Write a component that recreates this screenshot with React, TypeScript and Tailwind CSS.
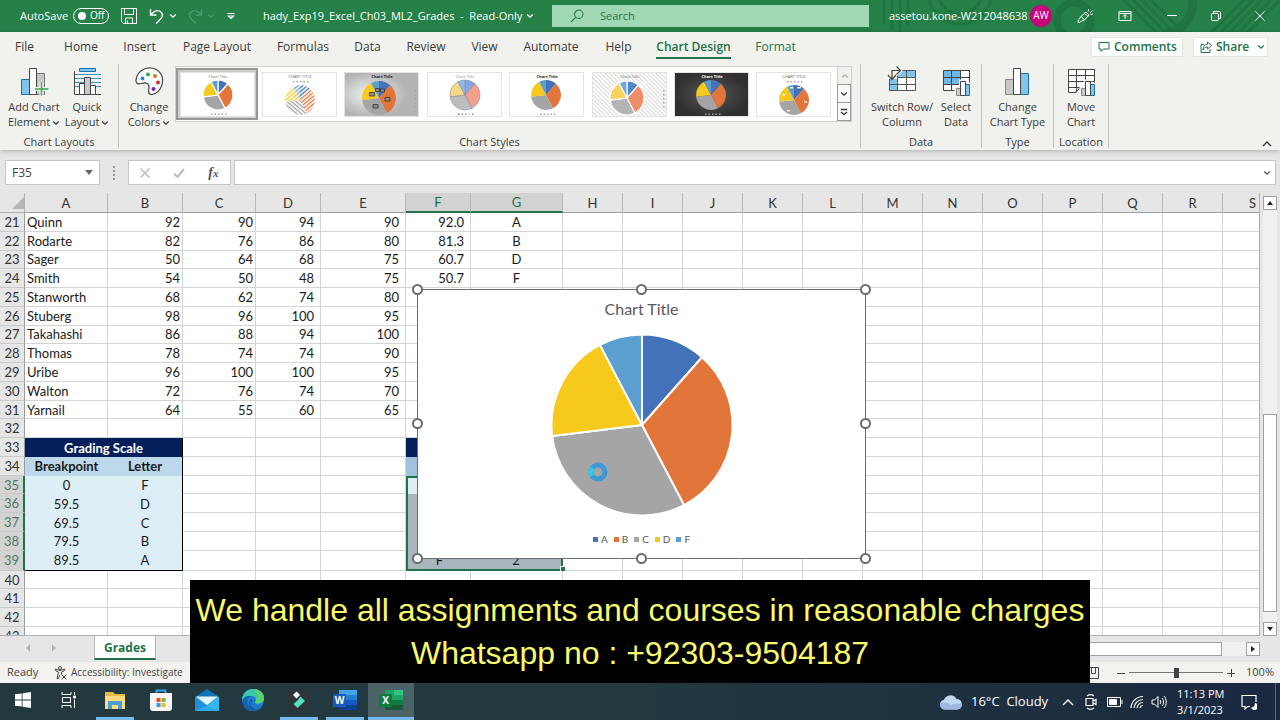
import React from "react";

const COUNTS = [3, 8, 8, 5, 2];
const GRADES = ["A", "B", "C", "D", "F"];
const COLORS = ["#4472b8", "#e2763a", "#a5a5a5", "#f7c91c", "#5b9fd0"];
const SOFT = ["#86a8dd", "#f2a08c", "#bdbdbd", "#f8d886", "#8fbbe6"];

type PieProps = {
  cx: number;
  cy: number;
  r: number;
  fills?: string[];
  stroke?: string;
  strokeWidth?: number;
};

function Pie({ cx, cy, r, fills = COLORS, stroke = "none", strokeWidth = 0 }: PieProps) {
  const total = COUNTS.reduce((a, b) => a + b, 0);
  let run = 0;
  return (
    <g stroke={stroke} strokeWidth={strokeWidth} strokeLinejoin="round">
      {COUNTS.map((n, i) => {
        const a = (run / total) * Math.PI * 2;
        run += n;
        const b = (run / total) * Math.PI * 2;
        const d = `M${cx} ${cy}L${cx + r * Math.sin(a)} ${cy - r * Math.cos(a)}A${r} ${r} 0 0 1 ${cx + r * Math.sin(b)} ${cy - r * Math.cos(b)}Z`;
        return <path key={i} d={d} fill={fills[i]} />;
      })}
    </g>
  );
}

function Chevron({ className = "" }: { className?: string }) {
  return (
    <svg viewBox="0 0 8 8" className={`inline-block h-2 w-2 ${className}`} fill="none" stroke="currentColor" strokeWidth="1.3">
      <path d="M1.2 2.6 4 5.2 6.8 2.6" />
    </svg>
  );
}

/* ---------- title bar ---------- */

function TitlePattern() {
  return (
    <svg className="absolute inset-y-0 right-0 h-full w-[410px]" viewBox="0 0 410 32" preserveAspectRatio="xMaxYMid slice" fill="none" stroke="#1f7440" aria-hidden="true">
      <g strokeWidth="3">
        <path d="M14 0v24M22 0v30M30 0v32M38 0v26" />
        <circle cx="90" cy="-8" r="22" />
        <circle cx="90" cy="-8" r="32" />
      </g>
      <circle cx="204" cy="20" r="17" strokeWidth="8" />
      <path d="M250 -4l40 40M259 -4l40 40M268 -4l40 40M277 -4l40 40" strokeWidth="3" />
      <path d="M322 -4a32 32 0 0 1-26 38" strokeWidth="9" />
      <path d="M338 36l40-40M347 36l40-40M356 36l40-40M365 36l40-40M374 36l40-40" strokeWidth="3" />
    </svg>
  );
}

function TitleBar() {
  return (
    <header className="relative flex h-8 shrink-0 items-center overflow-hidden bg-[#258147] text-xs text-white">
      <TitlePattern />
      <div className="relative flex w-[552px] shrink-0 items-center pl-5">
        <label className="flex items-center gap-1">
          <span className="w-[49px] text-[11px]">AutoSave</span>
          <button role="switch" aria-checked="false" className="flex h-4 w-9 items-center gap-1 rounded-full border border-white pl-1 text-[10px]">
            <span className="h-2 w-2 rounded-full bg-white" />
            Off
          </button>
        </label>
        <button aria-label="Save" className="ml-3">
          <svg viewBox="0 0 16 16" className="h-4 w-4" fill="none" stroke="currentColor">
            <path d="M.5 .5h15v15h-13l-2-2zM3.5 .5v6h9v-6M4.500 15v-5h7v5M6.500 15v-2.500" />
          </svg>
        </button>
        <button aria-label="Undo" className="ml-3">
          <svg viewBox="0 0 16 16" className="h-4 w-4" fill="none" stroke="currentColor" strokeWidth="1.3">
            <path d="M1.500 1v6h6M1.800 6.700C5 2.500 9 1.500 12 4c3 3 1.500 6-5 11.500" />
          </svg>
        </button>
        <Chevron className="ml-1" />
        <button aria-label="Redo" className="ml-2.5 text-[#4c9c69]">
          <svg viewBox="0 0 16 16" className="h-4 w-4" fill="none" stroke="currentColor" strokeWidth="1.3">
            <path d="M14.500 1v6h-6M14.200 6.700C11 2.500 7 1.500 4 4c-3 3-1.500 6 5 11.500" />
          </svg>
        </button>
        <Chevron className="ml-1 text-[#4c9c69]" />
        <button aria-label="Customize Quick Access Toolbar" className="ml-3">
          <svg viewBox="0 0 8 8" className="h-2 w-2" fill="none" stroke="currentColor" strokeWidth="1.2">
            <path d="M.5 1.500h7M1.500 4 4 6.500 6.500 4z" />
          </svg>
        </button>
        <div className="ml-7 flex items-center gap-1 whitespace-pre text-[11px]">
          <span>hady_Exp19_Excel_Ch03_ML2_Grades  -  Read-Only</span>
          <Chevron />
        </div>
      </div>
      <label className="relative mr-5 flex h-[22px] flex-1 items-center gap-4 bg-[#a0d8b4] pl-[18px] text-[#217346]">
        <svg viewBox="0 0 16 16" className="h-3.5 w-3.5 shrink-0" fill="none" stroke="currentColor" strokeWidth="1.2">
          <circle cx="10" cy="6" r="4.800" />
          <path d="M6.500 9.500 1 15" />
        </svg>
        <input aria-label="Search" placeholder="Search" className="w-full bg-transparent text-[11px] outline-none placeholder:text-[#217346]" />
      </label>
      <div className="relative flex w-[391px] shrink-0 items-center">
        <span className="w-[141px] text-[11px]">assetou.kone-W212048638</span>
        <span className="flex h-[22px] w-[22px] items-center justify-center rounded-full bg-[#c8007c] text-[10px]">AW</span>
        <button aria-label="Coming soon" className="ml-6">
          <svg viewBox="0 0 18 16" className="h-4 w-[18px]" fill="none" stroke="currentColor">
            <path d="M2 14.500c0-2 1-3.500 3-6L10 4l3 3-4.500 5c-2 1-3.500 1-5 2.500zM5 8.500l3.500 3.500M12 3.500 13 1M14 5l2.500-2.500M14.500 6.500 17 6M9 5.500l3 3" />
          </svg>
        </button>
        <button aria-label="Ribbon display options" className="ml-6">
          <svg viewBox="0 0 14 12" className="h-3 w-3.5" fill="none" stroke="currentColor">
            <path d="M1 1.500h12v9H1zM1 3.500h12M7 9V5M5 6.500l2-2 2 2" />
          </svg>
        </button>
        <button aria-label="Minimize" className="ml-8 flex w-4 justify-center">
          <svg viewBox="0 0 10 10" className="h-2.5 w-2.5" stroke="currentColor"><path d="M0 4.500h10" /></svg>
        </button>
        <button aria-label="Restore" className="ml-7 flex w-4 justify-center">
          <svg viewBox="0 0 10 10" className="h-2.5 w-2.5" fill="none" stroke="currentColor">
            <rect x=".5" y="2.500" width="7" height="7" rx="1" />
            <path d="M2.500 2V.5h6l1 1v6H8" />
          </svg>
        </button>
        <button aria-label="Close" className="ml-7 flex w-4 justify-center">
          <svg viewBox="0 0 10 10" className="h-2.5 w-2.5" stroke="currentColor"><path d="M.5 .5l9 9M9.500 .5l-9 9" /></svg>
        </button>
      </div>
    </header>
  );
}

/* ---------- ribbon ---------- */

const TABS: [string, string][] = [
  ["File", "w-[49px]"],
  ["Home", "w-[64px]"],
  ["Insert", "w-[53px]"],
  ["Page Layout", "w-[102px]"],
  ["Formulas", "w-[70px]"],
  ["Data", "w-[59px]"],
  ["Review", "w-[58px]"],
  ["View", "w-[59px]"],
  ["Automate", "w-[74px]"],
  ["Help", "w-[61px]"],
  ["Chart Design", "w-[89px]"],
  ["Format", "w-[75px]"],
];

function RibbonTabs() {
  return (
    <nav className="flex h-[30px] items-center text-xs">
      {TABS.map(([name, w]) => (
        <button
          key={name}
          className={`${w} flex shrink-0 justify-center whitespace-nowrap ${name === "Chart Design" ? "font-semibold text-[#217346]" : name === "Format" ? "text-[#217346]" : ""}`}
        >
          <span className={name === "Chart Design" ? "border-b-2 border-[#217346] pt-0.5 leading-5" : "leading-5"}>{name}</span>
        </button>
      ))}
      <div className="ml-auto flex gap-2.5 pr-3 text-xs font-semibold text-[#217346]">
        <button className="flex h-5 w-[92px] items-center gap-1 border border-[#e4e4e0] bg-white pl-1.5">
          <svg viewBox="0 0 12 12" className="h-3 w-3 shrink-0" fill="none" stroke="currentColor"><path d="M1 1.500h10v6.500H5.500L3 10.500V8H1z" /></svg>
          Comments
        </button>
        <button className="flex h-5 w-[75px] items-center gap-1 border border-[#e4e4e0] bg-white pl-1.5">
          <svg viewBox="0 0 12 12" className="h-3 w-3 shrink-0" fill="none" stroke="currentColor">
            <path d="M4 3.500H1v8h9V8M7.500 1l4 3.500-4 3.500V6C5 6 4 7 3 9c0-3.500 1.500-5.500 4.500-5.800z" />
          </svg>
          Share
          <Chevron className="ml-1" />
        </button>
      </div>
    </nav>
  );
}

function BigButton({ icon, lines, menu, className = "" }: { icon: React.ReactNode; lines: [string, string]; menu?: boolean; className?: string }) {
  return (
    <button className={`flex shrink-0 flex-col items-center text-[11px] leading-[15px] ${className}`}>
      <span className="mb-[3px] flex h-8 items-end">{icon}</span>
      <span className="whitespace-nowrap">{lines[0]}</span>
      <span className="whitespace-nowrap">
        {lines[1]}
        {menu && <Chevron className="ml-0.5" />}
      </span>
    </button>
  );
}

function Group({ label, className, children }: { label: string; className: string; children: React.ReactNode }) {
  return (
    <section className={`flex flex-col border-r border-[#c4c4c0] ${className}`}>
      <div className="flex flex-1 justify-center">{children}</div>
      <h2 className="text-center text-[11px] leading-[13px]">{label}</h2>
    </section>
  );
}

const ico = "h-[30px] w-[30px]";

function AddElementIcon() {
  return (
    <svg viewBox="0 0 30 30" className={ico}>
      <path d="M2.500 13.500h9v15h-9z" fill="#83c4ec" stroke="#1b6fa8" />
      <path d="M17.500 7.500h8v21h-8z" fill="#c8c8c8" stroke="#777" />
      <path d="M10.500 2.500h7v26h-7z" fill="#fff" stroke="#444" />
      <path d="M22.500 16v14M15.500 23h14" stroke="#f1f1ed" strokeWidth="4" />
      <path d="M22.500 16v13.500M16 23h13.500" stroke="#38a850" strokeWidth="1.400" />
    </svg>
  );
}

function QuickLayoutIcon() {
  return (
    <svg viewBox="0 0 30 30" className={ico}>
      <path d="M7.500 2.500h16v3h-16z" fill="#83c4ec" stroke="#1b6fa8" />
      <path d="M3 8.500h26M3 12.500h26M3 16.500h26M3 20.500h26" stroke="#3b8fc4" />
      <path d="M2.500 5v23.500H29" fill="none" stroke="#444" />
      <path d="M7.500 17.500h5v11h-5z" fill="#fff" stroke="#444" />
      <path d="M12.500 11.500h6v17h-6z" fill="#c8c8c8" stroke="#444" />
      <path d="M18.500 19.500h5v9h-5z" fill="#fff" stroke="#444" />
    </svg>
  );
}

function PaletteIcon() {
  return (
    <svg viewBox="0 0 30 30" className={ico}>
      <path d="M2 14C3 5 11 1.500 17 2c8 1 12 7 11.500 13.500C28 24 21 29 17 28.500c-4.500-1-1.500-5-2-8.500-1-4-5-3.500-8-2.500-3 .8-5.500 0-5-3.500z" fill="#fff" stroke="#444" strokeWidth="1.200" />
      <circle cx="8.500" cy="12.500" r="2" fill="#2b88c8" />
      <circle cx="14" cy="8.500" r="2" fill="#38a850" />
      <circle cx="21" cy="10" r="2" fill="#d67a1c" />
      <circle cx="24" cy="16.500" r="2" fill="#d13438" />
      <circle cx="19.500" cy="23" r="2" fill="#8b1fa8" />
    </svg>
  );
}

function MiniBars({ x, y }: { x: number; y: number }) {
  return (
    <g>
      <path d={`M${x - 1.5} ${y + 5.5}h4.500v-7h7.500v3h4.500v15h-16.500z`} fill="#f1f1ed" />
      <path d={`M${x + 0.5} ${y + 7.5}h4v7h-4z`} fill="#c8c8c8" stroke="#888" />
      <path d={`M${x + 9.5} ${y + 3.5}h4v11h-4z`} fill="#83c4ec" stroke="#1b6fa8" />
      <path d={`M${x + 4.5} ${y + 0.5}h5v14h-5z`} fill="#fff" stroke="#444" />
    </g>
  );
}

function SwitchIcon() {
  return (
    <svg viewBox="0 0 30 30" className={ico}>
      <path d="M2.500 4.500h26v20h-26z" fill="#fff" />
      <path d="M2.500 4.500h26v7h-26zM2.500 11.500h8v13h-8z" fill="#83c4ec" />
      <path d="M2.500 4.500h26v20h-26zM10.500 4.500v20M19.500 4.500v20M2.500 11.500h26M2.500 18.500h26" fill="none" stroke="#555" />
      <path d="M0 0h10l6 5-6 5v3H0z" fill="#f1f1ed" />
      <path d="M5 13V4.500h9M9.500 .5l4 4-4 4M1 9l4 4.500L9 9" fill="none" stroke="#444" strokeWidth="1.200" />
    </svg>
  );
}

function SelectDataIcon() {
  return (
    <svg viewBox="0 0 30 30" className={ico}>
      <path d="M2.500 4.500h26v20h-26z" fill="#fff" />
      <path d="M2.500 4.500h17v14h-17z" fill="#6db8e8" />
      <path d="M2.500 4.500h26v20h-26zM10.500 4.500v20M19.500 4.500v20M2.500 11.500h26M2.500 18.500h26" fill="none" stroke="#444" />
      <MiniBars x={15} y={15} />
    </svg>
  );
}

function ChartTypeIcon() {
  return (
    <svg viewBox="0 0 30 30" className={ico}>
      <path d="M3.500 13.500h8v15h-8z" fill="#c8c8c8" stroke="#888" />
      <path d="M18.500 7.500h8v21h-8z" fill="#83c4ec" stroke="#1b6fa8" />
      <path d="M11.500 2.500h7v26h-7z" fill="#fff" stroke="#444" />
    </svg>
  );
}

function MoveChartIcon() {
  return (
    <svg viewBox="0 0 30 30" className={ico}>
      <path d="M2.500 3.500h26v18H14l-4 5H2.500zM10.500 3.500v18M19.500 3.500v18M2.500 9.500h26M2.500 15.500h26M2.500 21.500H14M10 26.500l1-5" fill="#fff" stroke="#444" />
      <MiniBars x={15} y={15} />
    </svg>
  );
}

type Style = {
  bg: string;
  title: string;
  titleColor: string;
  fills?: string[];
  stroke?: string;
  sw?: number;
  r?: number;
  cx?: number;
  cy?: number;
  legend: "bottom" | "top" | "right";
  marks?: string[];
  bold?: boolean;
  labels?: boolean;
  lightLabels?: boolean;
};

const STYLES: Style[] = [
  { bg: "#fff", title: "Chart Title", titleColor: "#666", stroke: "#fff", sw: 1.2, legend: "bottom", cy: 23, cx: 38 },
  { bg: "#fff", title: "CHART TITLE", titleColor: "#666", fills: ["a", "b", "c", "d", "f"].map((k) => `url(#hatch-${k})`), legend: "top", cy: 28, cx: 38 },
  { bg: "url(#silver)", title: "Chart Title", titleColor: "#222", legend: "right", cy: 26, r: 17, cx: 35, bold: true, labels: true },
  { bg: "#fff", title: "Chart Title", titleColor: "#888", fills: SOFT, stroke: "#7d8bb0", sw: 0.6, legend: "bottom", cy: 23, cx: 38, marks: COLORS },
  { bg: "#fff", title: "Chart Title", titleColor: "#222", legend: "bottom", cy: 23, cx: 37, bold: true },
  { bg: "url(#stripes)", title: "Chart Title", titleColor: "#666", fills: ["#4f86cc", "#ef8d66", "#b4b4b4", "#f7d25f", "#6da6dc"], stroke: "#fff", sw: 1.2, legend: "right", cy: 26, r: 17, cx: 35 },
  { bg: "url(#coal)", title: "Chart Title", titleColor: "#fff", legend: "bottom", cy: 23, cx: 37, bold: true },
  { bg: "#fff", title: "CHART TITLE", titleColor: "#555", legend: "top", cy: 28, cx: 38, lightLabels: true },
];

function StyleThumb({ s }: { s: Style }) {
  const { cx = 37, cy = 24, r = 15 } = s;
  return (
    <svg viewBox="0 0 75 45" className="h-[45px] w-[75px]">
      <rect x=".5" y=".5" width="74" height="44" fill={s.bg} stroke="#e3e3e3" />
      <text x="38" y="5.500" fontSize="4" textAnchor="middle" fill={s.titleColor} fontWeight={s.bold ? 700 : 400}>
        {s.title}
      </text>
      <Pie cx={cx} cy={cy} r={r} fills={s.fills} stroke={s.stroke} strokeWidth={s.sw} />
      {s.labels && (
        <path d="M31.500 16.500h4v3h-4zM36.500 17h4v3h-4zM25.500 20.500h5v3.500h-5zM41 25.500h5v3.500h-5zM29 32.500h5v3.500h-5z" fill="#8a8a8a" stroke="#333" strokeWidth=".8" />
      )}
      {s.lightLabels && <path d="M34 15h3v1.500h-3zM41 15h4v1.500h-4zM26 22h3v1.500h-3zM48 29h3v1.500h-3zM31 38h3v1.500h-3z" fill="#fbeec2" />}
      {GRADES.map((g, i) => (
        <rect
          key={g}
          x={s.legend === "right" ? 71 : 31 + i * 3.5}
          y={s.legend === "right" ? 18 + i * 4 : s.legend === "top" ? 9 : 41.5}
          width="1.500"
          height="1.500"
          fill={s.marks ? s.marks[i] : "#a3a3a3"}
        />
      ))}
    </svg>
  );
}

function ThumbDefs() {
  return (
    <svg className="absolute h-0 w-0" aria-hidden="true">
      <defs>
        {["a", "b", "c", "d", "f"].map((k, i) => (
          <pattern key={k} id={`hatch-${k}`} width="3" height="3" patternUnits="userSpaceOnUse" patternTransform={`rotate(${k === "c" ? 40 : -40})`}>
            <rect width="3" height="3" fill="#fff" />
            <rect width="3" height="1.300" fill={COLORS[i]} />
          </pattern>
        ))}
        <pattern id="stripes" width="3" height="3" patternUnits="userSpaceOnUse" patternTransform="rotate(45)">
          <rect width="3" height="3" fill="#fff" />
          <rect width="3" height="1.200" fill="#dcdcdc" />
        </pattern>
        <radialGradient id="silver" cx=".35">
          <stop offset="0" stopColor="#f4f4f4" />
          <stop offset="1" stopColor="#b4b4b4" />
        </radialGradient>
        <radialGradient id="coal">
          <stop offset="0" stopColor="#585858" />
          <stop offset="1" stopColor="#303030" />
        </radialGradient>
      </defs>
    </svg>
  );
}

function Ribbon() {
  return (
    <div className="relative z-10 shrink-0 bg-[#f1f1ed] text-[#3b3b3b] shadow-[0_1px_5px_rgba(0,0,0,0.25)]">
      <RibbonTabs />
      <div className="flex h-[88px] pt-0.5 pb-0.5">
        <Group label="Chart Layouts" className="w-[119px] shrink-0">
          <BigButton icon={<AddElementIcon />} lines={["Add Chart", "Element"]} menu className="w-14" />
          <BigButton icon={<QuickLayoutIcon />} lines={["Quick", "Layout"]} menu className="w-[50px]" />
        </Group>
        <Group label="Chart Styles" className="flex-1">
          <BigButton icon={<PaletteIcon />} lines={["Change", "Colors"]} menu className="w-14 pl-1" />
          <div className="mt-0.5 mr-2 flex h-[56px] flex-1 border border-[#cfcfcb] bg-white">
            <ThumbDefs />
            <div className="flex flex-1 justify-between py-px pr-0.5">
              {STYLES.map((s, i) => (
                <button key={i} aria-label={`Style ${i + 1}`} className={`flex h-[52px] w-[82px] items-center justify-center border-2 ${i === 0 ? "border-[#979797] bg-[#cbcbcb]" : "border-transparent"}`}>
                  <StyleThumb s={s} />
                </button>
              ))}
            </div>
            <div className="flex w-3.5 flex-col">
              <button aria-label="Previous styles" className="flex flex-1 items-center justify-center border-l border-[#cfcfcb] bg-[#f1f1ed] text-[#aaa]"><Chevron className="rotate-180" /></button>
              <button aria-label="Next styles" className="flex flex-1 items-center justify-center border border-[#9a9a9a] bg-[#f8f8f6]"><Chevron /></button>
              <button aria-label="More styles" className="flex flex-1 items-center justify-center border border-t-0 border-[#9a9a9a] bg-[#f8f8f6]">
                <svg viewBox="0 0 8 8" className="h-2 w-2" fill="none" stroke="currentColor" strokeWidth="1.400"><path d="M1 1.500h6M1 4l3 2.600L7 4" /></svg>
              </button>
            </div>
          </div>
        </Group>
        <Group label="Data" className="w-[121px] shrink-0">
          <BigButton icon={<SwitchIcon />} lines={["Switch Row/", "Column"]} className="w-[70px]" />
          <BigButton icon={<SelectDataIcon />} lines={["Select", "Data"]} className="w-[38px]" />
        </Group>
        <Group label="Type" className="w-[72px] shrink-0">
          <BigButton icon={<ChartTypeIcon />} lines={["Change", "Chart Type"]} />
        </Group>
        <Group label="Location" className="w-[55px] shrink-0">
          <BigButton icon={<MoveChartIcon />} lines={["Move", "Chart"]} />
        </Group>
        <div className="flex w-[171px] shrink-0 items-end justify-end pr-2">
          <button aria-label="Collapse the ribbon">
            <svg viewBox="0 0 10 8" className="h-2 w-2.5" fill="none" stroke="currentColor" strokeWidth="1.300"><path d="M1 6l4-4 4 4" /></svg>
          </button>
        </div>
      </div>
    </div>
  );
}

/* ---------- formula bar ---------- */

function FormulaBar() {
  return (
    <div className="flex h-[43px] shrink-0 items-start bg-[#e6e6e6] pt-2.5 pr-1 pl-[5px]">
      <div className="flex h-[25px] w-[95px] items-center border border-[#c6c6c6] bg-white pr-1.5 pl-1.5">
        <input aria-label="Name Box" defaultValue="F35" className="w-full bg-transparent text-xs text-[#444] outline-none" />
        <svg viewBox="0 0 8 5" className="h-[5px] w-2 shrink-0" fill="#666"><path d="M0 0h8L4 5z" /></svg>
      </div>
      <svg viewBox="0 0 2 14" className="mt-1.5 ml-[13px] h-3.5 w-0.5" fill="#999"><path d="M0 0h2v2H0zM0 4h2v2H0zM0 8h2v2H0zM0 12h2v2H0z" /></svg>
      <div className="ml-[13px] flex h-[25px] w-[103px] items-center justify-around border border-[#c6c6c6] bg-white">
        <button aria-label="Cancel"><svg viewBox="0 0 10 10" className="h-2.5 w-2.5" stroke="#bdbdbd" strokeWidth="1.500"><path d="M.5 .5l9 9M9.500 .5l-9 9" /></svg></button>
        <button aria-label="Enter"><svg viewBox="0 0 12 10" className="h-2.5 w-3" fill="none" stroke="#bdbdbd" strokeWidth="2"><path d="M1 5.500 4.500 9 11 1" /></svg></button>
        <button aria-label="Insert Function" className="font-['Liberation_Serif',serif] text-sm leading-4 font-bold text-[#555] italic">f<span className="text-[11px]">x</span></button>
      </div>
      <div className="ml-[3px] flex h-[25px] flex-1 items-center border border-[#c6c6c6] bg-white pr-1">
        <input aria-label="Formula Bar" className="w-full bg-transparent text-xs outline-none" />
        <Chevron className="shrink-0 text-[#555]" />
      </div>
    </div>
  );
}

/* ---------- sheet ---------- */

const COLS: [string, string][] = [
  ["A", "w-[83px]"],
  ["B", "w-[75px]"],
  ["C", "w-[73px]"],
  ["D", "w-[65px]"],
  ["E", "w-[85px]"],
  ["F", "w-[65px]"],
  ["G", "w-[92px]"],
  ..."HIJKLMNOPQRS".split("").map((c): [string, string] => [c, "w-[60px]"]),
];

const STUDENTS: Record<number, string[]> = {
  21: ["Quinn", "92", "90", "94", "90", "92.0", "A"],
  22: ["Rodarte", "82", "76", "86", "80", "81.3", "B"],
  23: ["Sager", "50", "64", "68", "75", "60.7", "D"],
  24: ["Smith", "54", "50", "48", "75", "50.7", "F"],
  25: ["Stanworth", "68", "62", "74", "80"],
  26: ["Stuberg", "98", "96", "100", "95"],
  27: ["Takahashi", "86", "88", "94", "100"],
  28: ["Thomas", "78", "74", "74", "90"],
  29: ["Uribe", "96", "100", "100", "95"],
  30: ["Walton", "72", "76", "74", "70"],
  31: ["Yarnail", "64", "55", "60", "65"],
};

const SCALE: Record<number, [string, string]> = {
  35: ["0", "F"],
  36: ["59.5", "D"],
  37: ["69.5", "C"],
  38: ["79.5", "B"],
  39: ["89.5", "A"],
};

const ALIGN = ["text-left pl-0.5", "text-right pr-0.5", "text-right pr-0.5", "text-right pr-1.5", "text-right pr-1.5", "text-right pr-1.5", "text-center"];
const LINE = "border-r border-b border-[#d4d4d4]";

function Row({ n }: { n: number }) {
  const selected = n >= 35 && n <= 39;
  const cells: React.ReactNode[] = [];
  for (let c = 0; c < COLS.length; c++) {
    const key = COLS[c][0];
    if (c === 0 && n === 33) {
      cells.push(<th key={key} colSpan={2} className="border-r border-black bg-[#04205a] font-bold text-white">Grading Scale</th>);
      c = 1;
    } else if (c < 2 && n === 34) {
      cells.push(<th key={key} className={`bg-[#bcd8ea] font-bold ${c === 1 ? "border-r border-black" : ""}`}>{c === 0 ? "Breakpoint" : "Letter"}</th>);
    } else if (c < 2 && SCALE[n]) {
      cells.push(<td key={key} className={`bg-[#deeef6] text-center ${c === 1 ? "border-r border-black" : ""} ${n === 39 ? "border-b border-b-black" : ""}`}>{SCALE[n][c]}</td>);
    } else if (c === 5 && n === 33) {
      cells.push(<td key={key} colSpan={2} className="bg-[#04205a]" />);
      c = 6;
    } else if ((c === 5 || c === 6) && n === 34) {
      cells.push(<td key={key} className="bg-[#9fc2e0]" />);
    } else if ((c === 5 || c === 6) && selected) {
      cells.push(
        <td
          key={key}
          className={`text-center ${n === 35 && c === 5 ? "bg-[#deeef6]" : "bg-[#a9b5bc]"} ${n === 35 ? "border-t-2 border-t-[#217346]" : ""} ${c === 5 ? "border-l-2 border-l-[#217346]" : "border-r-2 border-r-[#217346]"} ${n === 39 ? "border-b-2 border-b-[#217346]" : ""}`}
        >
          {n === 39 ? (c === 5 ? "F" : "2") : ""}
        </td>
      );
    } else {
      cells.push(<td key={key} className={`${LINE} ${ALIGN[c] ?? ""}`}>{STUDENTS[n]?.[c]}</td>);
    }
  }
  return (
    <tr>
      <th className={`border-b border-b-[#c9c9c9] font-normal ${selected ? "border-r-2 border-r-[#217346] bg-[#d3d3d3] text-[#4b7a60]" : "border-r border-r-[#9b9b9b] bg-[#e6e6e6] text-[#333]"}`}>{n}</th>
      {cells}
    </tr>
  );
}

function Handle({ className }: { className: string }) {
  return <span className={`absolute h-[11px] w-[11px] rounded-full border-2 border-[#6a6a6a] bg-white ${className}`} />;
}

function ChartObject() {
  return (
    <figure className="absolute top-[96px] left-[417px] flex h-[270px] w-[449px] flex-col items-center border border-[#6f6f6f] bg-white text-[#595959]">
      <figcaption className="mt-[7px] text-base leading-6">Chart Title</figcaption>
      <svg viewBox="0 0 184 184" className="mt-3 h-[184px] w-[184px]" role="img" aria-label="Grade distribution">
        <Pie cx={92} cy={92} r={90.5} stroke="#fff" strokeWidth={2} />
      </svg>
      <ul className="mt-3.5 flex gap-1.5 text-[10px] leading-4">
        {GRADES.map((g, i) => (
          <li key={g} className="flex items-center gap-[3px]">
            <svg viewBox="0 0 5 5" className="h-[5px] w-[5px]"><rect width="5" height="5" fill={COLORS[i]} /></svg>
            {g}
          </li>
        ))}
      </ul>
      <svg viewBox="0 0 20 20" className="absolute top-[172px] left-[170px] h-5 w-5" fill="none" strokeWidth="5">
        <circle cx="10" cy="10" r="7" stroke="#3f97d3" />
        <path d="M4.200 14A7 7 0 0 1 4.500 5.700" stroke="#2cc8ee" />
      </svg>
      <Handle className="-top-1.5 -left-1.5" />
      <Handle className="-top-1.5 left-[218px]" />
      <Handle className="-top-1.5 -right-1.5" />
      <Handle className="top-[128px] -left-1.5" />
      <Handle className="top-[128px] -right-1.5" />
      <Handle className="-bottom-1.5 -left-1.5" />
      <Handle className="-bottom-1.5 left-[218px]" />
      <Handle className="-right-1.5 -bottom-1.5" />
    </figure>
  );
}

function Sheet() {
  const rows = Array.from({ length: 23 }, (_, i) => 21 + i);
  return (
    <div className="flex min-h-0 flex-1 bg-[#e6e6e6]">
      <div className="relative min-w-0 flex-1 overflow-hidden border-r border-b border-[#b0b0b0] font-[Lato,'Noto_Sans',sans-serif] text-[13px] leading-4 text-[#1a1a1a]">
        <table className="h-[453px] w-[1283px] table-fixed border-separate border-spacing-0 bg-white">
          <colgroup>
            <col className="w-[25px]" />
            {COLS.map(([c, w]) => <col key={c} className={w} />)}
          </colgroup>
          <thead>
            <tr className="h-5 bg-[#e6e6e6] text-[#333]">
              <th className="border-r border-b border-[#b0b0b0]">
                <svg viewBox="0 0 12 12" className="ml-auto h-3 w-3" fill="#b5b5b5"><path d="M12 0v12H0z" /></svg>
              </th>
              {COLS.map(([c]) => (
                <th key={c} className={`border-r border-r-[#b9b9b9] font-normal ${c === "F" || c === "G" ? "border-b-2 border-b-[#217346] bg-[#d2d2d2] text-[#217346]" : "border-b border-b-[#a0a0a0]"}`}>{c}</th>
              ))}
            </tr>
          </thead>
          <tbody>{rows.map((n) => <Row key={n} n={n} />)}</tbody>
        </table>
        <span className="absolute top-[373px] left-[560px] h-[5px] w-[5px] border-t border-l border-white bg-[#217346]" />
        <ChartObject />
      </div>
      <div className="flex w-5 shrink-0 flex-col items-center pt-[3px]">
        <button aria-label="Scroll up" className="flex h-3.5 w-3.5 items-center justify-center border border-[#a0a0a0] bg-white">
          <svg viewBox="0 0 6 4" className="h-1 w-1.5"><path d="M0 4h6L3 0z" fill="#222" /></svg>
        </button>
        <div className="flex w-3.5 flex-1 flex-col justify-end bg-[#f0f0f0] pb-2.5">
          <div className="h-[198px] border border-[#a0a0a0] bg-white" />
        </div>
        <button aria-label="Scroll down" className="flex h-3.5 w-3.5 items-center justify-center border border-[#a0a0a0] bg-white">
          <svg viewBox="0 0 6 4" className="h-1 w-1.5"><path d="M0 0h6L3 4z" fill="#222" /></svg>
        </button>
      </div>
    </div>
  );
}

function SheetTabs() {
  return (
    <div className="flex h-[26px] shrink-0 items-start bg-[#e6e6e6]">
      <div className="flex h-6 w-[94px] items-center gap-[22px] pl-[26px]">
        <svg viewBox="0 0 4 8" className="h-2 w-1" fill="#b5b5b5"><path d="M4 0v8L0 4z" /></svg>
        <svg viewBox="0 0 4 8" className="h-2 w-1" fill="#b5b5b5"><path d="M0 0v8l4-4z" /></svg>
      </div>
      <button className="h-6 w-[62px] border-x border-b-2 border-x-[#b8b8b8] border-b-[#217346] bg-white pt-0.5 text-xs font-bold text-[#217346]">Grades</button>
      <div className="mt-1.5 mr-5 ml-auto flex w-[420px] bg-[#f0f0f0]">
        <div className="mr-6 h-3.5 flex-1 border border-[#a0a0a0] bg-white" />
        <button aria-label="Scroll right" className="flex h-3.5 w-3.5 items-center justify-center border border-[#a0a0a0] bg-white">
          <svg viewBox="0 0 4 6" className="h-1.5 w-1"><path d="M0 0v6l4-3z" fill="#222" /></svg>
        </button>
      </div>
    </div>
  );
}

function StatusBar() {
  return (
    <footer className="flex h-[21px] shrink-0 items-center bg-[#f3f2ee] pl-[7px] text-[11px] text-[#444]">
      <span className="w-[47px]">Ready</span>
      <button className="flex items-center gap-[3px] text-[10px]">
        <svg viewBox="0 0 14 14" className="h-3.5 w-3.5" fill="none" stroke="currentColor">
          <circle cx="6" cy="2" r="1.500" />
          <path d="M1 3l1 2 2.500 1L3 12.500h1.500L6 9M11 3l-1 2-2.500 1V8M1 3l5 1.500L11 3M7.500 8.500l5 5M12.500 8.500l-5 5" />
        </svg>
        Accessibility: Investigate
      </button>
      <div className="ml-auto flex items-center">
        <svg viewBox="0 0 12 12" className="mr-[18px] h-3 w-3" fill="none" stroke="currentColor"><path d="M.5 .5h11v11H.5zM4.500 .5v6h4v-6" /></svg>
        <button aria-label="Zoom out" className="w-3"><svg viewBox="0 0 8 8" className="h-2 w-2" stroke="currentColor"><path d="M0 4.500h8" /></svg></button>
        <input
          type="range"
          aria-label="Zoom"
          min={10}
          max={190}
          defaultValue={100}
          className="h-2.5 w-[94px] appearance-none bg-[linear-gradient(#777,#777)] bg-[length:100%_1px] bg-center bg-no-repeat [&::-webkit-slider-thumb]:h-2.5 [&::-webkit-slider-thumb]:w-[5px] [&::-webkit-slider-thumb]:appearance-none [&::-webkit-slider-thumb]:bg-[#444]"
        />
        <button aria-label="Zoom in" className="ml-1 w-3"><svg viewBox="0 0 8 8" className="h-2 w-2" stroke="currentColor"><path d="M0 4.500h8M4.500 0v8" /></svg></button>
        <span className="w-[41px] pr-1.5 text-right">100%</span>
      </div>
    </footer>
  );
}

/* ---------- taskbar ---------- */

function AppButton({ label, open, active, children }: { label: string; open?: boolean; active?: boolean; children: React.ReactNode }) {
  return (
    <button aria-label={label} className={`flex w-[46px] flex-col items-center ${active ? "bg-[#4b6267]" : ""}`}>
      <span className="flex flex-1 items-center justify-center">{children}</span>
      <span className={`h-[3px] ${active ? "w-full" : "w-[38px]"} ${open ? "bg-[#76b9ed]" : ""}`} />
    </button>
  );
}

const app = "h-6 w-6";

function Taskbar() {
  return (
    <div className="flex h-[37px] shrink-0 bg-linear-to-r from-[#23393f] via-[#21393f] to-[#1b2840] text-white">
      <AppButton label="Start">
        <svg viewBox="0 0 16 16" className="h-4 w-4" fill="#fff"><path d="M0 2.300 6.700 1.400v6.200H0zM7.500 1.300 16 0v7.600H7.500zM0 8.400h6.700v6.200L0 13.700zM7.500 8.400H16V16l-8.500-1.300z" /></svg>
      </AppButton>
      <AppButton label="Task View">
        <svg viewBox="0 0 16 16" className="h-4 w-4" fill="none" stroke="#fff"><path d="M1 0v2.500h9V0M1.500 5.500h8v5h-8zM1 16v-2.500h9V16M13.500 0v3M13.500 7.500V16" /><path d="M12.500 4h2v2h-2z" fill="#fff" /></svg>
      </AppButton>
      <AppButton label="File Explorer" open>
        <svg viewBox="0 0 24 24" className={app}>
          <path d="M2 4h8l2 2h10v15H2z" fill="#e9b93f" />
          <path d="M2 8h20v13H2z" fill="#fbdb7b" />
          <path d="M5 13h14v8h-4v-4H9v4H5z" fill="#4a9edb" />
        </svg>
      </AppButton>
      <AppButton label="Microsoft Store">
        <svg viewBox="0 0 24 24" className={app}>
          <path d="M7.500 6V2.500h9V6" fill="none" stroke="#36a8dc" strokeWidth="1.800" />
          <path d="M1 5h22v15a3 3 0 0 1-3 3H4a3 3 0 0 1-3-3z" fill="#f6f6f6" />
          <path d="M7.500 10h4v4h-4z" fill="#e8502c" /><path d="M12.500 10h4v4h-4z" fill="#7db72f" /><path d="M7.500 15h4v4h-4z" fill="#2f9fe0" /><path d="M12.500 15h4v4h-4z" fill="#f4b61f" />
        </svg>
      </AppButton>
      <AppButton label="Mail">
        <svg viewBox="0 0 24 24" className={app}>
          <path d="M0 9 12 1l12 8v2H0z" fill="#1173bd" />
          <path d="M0 9h24v14H0z" fill="#2fa8e6" />
          <path d="M1 8.500h22L12 17z" fill="#e8f4fb" />
          <path d="M0 9l12 9L0 23z" fill="#1f8fd4" />
          <path d="M24 9l-12 9 12 5z" fill="#38b6ee" />
        </svg>
      </AppButton>
      <AppButton label="Microsoft Edge">
        <svg viewBox="0 0 24 24" className={app}>
          <circle cx="12" cy="12" r="11" fill="#1a7fd0" />
          <path d="M1 11C2 4 7 1 12 1c7 0 11 4.500 11 9 0 4-3 5.500-6 5.500-2.500 0-3.500-1-2.500-2 1.500-2 0-5.500-4-5.500C6 8 2 10 1 14z" fill="#3cc6b0" />
          <path d="M12 1c7 0 11 4.500 11 9 0 4-3 5.500-6 5.500-1.500 0-3-.6-2.800-1.500C18 9 17 4 12 1z" fill="#5bd06b" />
          <path d="M1 13c1-3.500 5-5.500 9-5-4 1-5 6-2.500 10 2 3 5.500 4.500 9 4C8 25 1 20 1 13z" fill="#1461ae" />
          <path d="M10.500 13c-1 5 4 8 10 5.500l1-.5c-3 5-10 5.500-13 0-1-2-.5-5 2-7z" fill="#23393f" />
          <path d="M9 12.500c-2 5 2 9.500 8 9.500 2-1 3.500-2.500 4.500-4.500-5 2.500-11 1-11-4z" fill="#1d75c4" />
        </svg>
      </AppButton>
      <AppButton label="Filmora" open>
        <svg viewBox="0 0 22 22" className="h-[22px] w-[22px]">
          <rect width="22" height="22" rx="2" fill="#2e3439" />
          <path d="M5 6l3.500-3.500L12 6 8.500 9.500z" fill="#fff" />
          <path d="M12.500 7.500 17 12l-7.500 7-4-4 4-3.500z" fill="#55e0bf" />
        </svg>
      </AppButton>
      <AppButton label="Word" open>
        <svg viewBox="0 0 24 24" className={app}>
          <path d="M6 2h18v20H6z" fill="#2b7cd3" /><path d="M6 2h18v5H6z" fill="#41a5ee" /><path d="M6 12h18v5H6z" fill="#185abd" /><path d="M6 17h18v5H6z" fill="#103f91" />
          <rect y="6" width="13" height="13" rx="1" fill="#185abd" />
          <text x="6.500" y="16" fontSize="10" fontWeight="700" fill="#fff" textAnchor="middle">W</text>
        </svg>
      </AppButton>
      <AppButton label="Excel" open active>
        <svg viewBox="0 0 24 24" className={app}>
          <path d="M6 2h9v20H6z" fill="#21a366" /><path d="M15 2h9v5h-9z" fill="#33c481" /><path d="M15 7h9v5h-9z" fill="#21a366" /><path d="M6 12h9v5H6zM15 12h9v5h-9z" fill="#107c41" /><path d="M6 17h18v5H6z" fill="#185c37" />
          <rect y="6" width="13" height="13" rx="1" fill="#107c41" />
          <text x="6.500" y="16" fontSize="10" fontWeight="700" fill="#fff" textAnchor="middle">X</text>
        </svg>
      </AppButton>
      <div className="ml-auto flex items-center">
        <button className="flex items-center gap-2 text-[13px]">
          <svg viewBox="0 0 24 16" className="h-4 w-6">
            <path d="M5.500 15.500a5 5 0 0 1-.6-9.800A7 7 0 0 1 17.500 5a5.300 5.300 0 0 1 1 10.500z" fill="#c3d6f3" />
            <path d="M5 15.500a5 5 0 0 1-4-6c5-3 9 0 11 1.500 3-2 8-2 11 0a5 5 0 0 1-4.500 4.500z" fill="#9fb8e2" />
          </svg>
          <span className="w-[77px] whitespace-pre text-left">16°C  Cloudy</span>
        </button>
        <div className="ml-3.5 flex items-center gap-[7px]">
          <svg viewBox="0 0 12 8" className="mr-[3px] h-2 w-3" fill="none" stroke="currentColor" strokeWidth="1.300"><path d="M1 7l5-5 5 5" /></svg>
          <svg viewBox="0 0 12 16" className="mr-0.5 h-4 w-3.5" fill="none" stroke="currentColor" strokeWidth="1.200"><path d="M1 4.500h7v7H1zM8 7l3-1.500v5L8 9M2 2C4 .5 7 .5 9 2M2 14c2 1.500 5 1.500 7 0" /></svg>
          <svg viewBox="0 0 16 10" className="h-2.5 w-4" fill="none" stroke="currentColor"><path d="M.5 .5h13v9H.5zM15 3v4" /><path d="M2.500 2.500h7v5h-7z" fill="currentColor" /></svg>
          <svg viewBox="0 0 14 14" className="h-3.5 w-3.5" fill="none" stroke="currentColor" strokeWidth="1.200"><path d="M1 13A12 12 0 0 1 13 1.500M4 13a9 9 0 0 1 9-8.500M7 13a6 6 0 0 1 6-5.500M10 13a3 3 0 0 1 3-2.500" /></svg>
          <svg viewBox="0 0 16 14" className="h-3.5 w-4" fill="none" stroke="currentColor"><path d="M1 5h2.500L7 1.500v11L3.500 9H1zM9 5c1 1 1 3 0 4M11 3c2 2 2 6 0 8M13 1c3 3 3 9 0 12" /></svg>
        </div>
        <div className="ml-2.5 w-[46px] text-center text-[11px] leading-4 whitespace-nowrap">
          <div>11:13 PM</div>
          <div>3/1/2023</div>
        </div>
        <button aria-label="Notifications" className="mr-[18px] ml-[18px]">
          <svg viewBox="0 0 16 16" className="h-4 w-4" fill="none" stroke="currentColor" strokeWidth="1.200">
            <path d="M9 12.500H6.500L4 15v-2.500H1v-11h14V8" />
            <path d="M14 9a3.500 3.500 0 1 1-4 4.500c2.500 0 4-1.500 4-4.500z" fill="currentColor" stroke="none" />
          </svg>
        </button>
        <span className="mr-1 h-[37px] w-px bg-[#59647a]" />
      </div>
    </div>
  );
}

export default function App() {
  return (
    <div className="relative flex h-screen flex-col overflow-hidden bg-[#e6e6e6] font-['Open_Sans','Noto_Sans',sans-serif]">
      <TitleBar />
      <Ribbon />
      <FormulaBar />
      <Sheet />
      <SheetTabs />
      <StatusBar />
      <Taskbar />
      <div className="absolute bottom-[37px] left-[190px] z-20 h-[103px] w-[900px] bg-black pt-[9px] text-center font-['Liberation_Sans',sans-serif] text-[32px] leading-[43px] whitespace-nowrap text-[#f7fb6b]">
        <p>We handle all assignments and courses in reasonable charges</p>
        <p>Whatsapp no : +92303-9504187</p>
      </div>
    </div>
  );
}
